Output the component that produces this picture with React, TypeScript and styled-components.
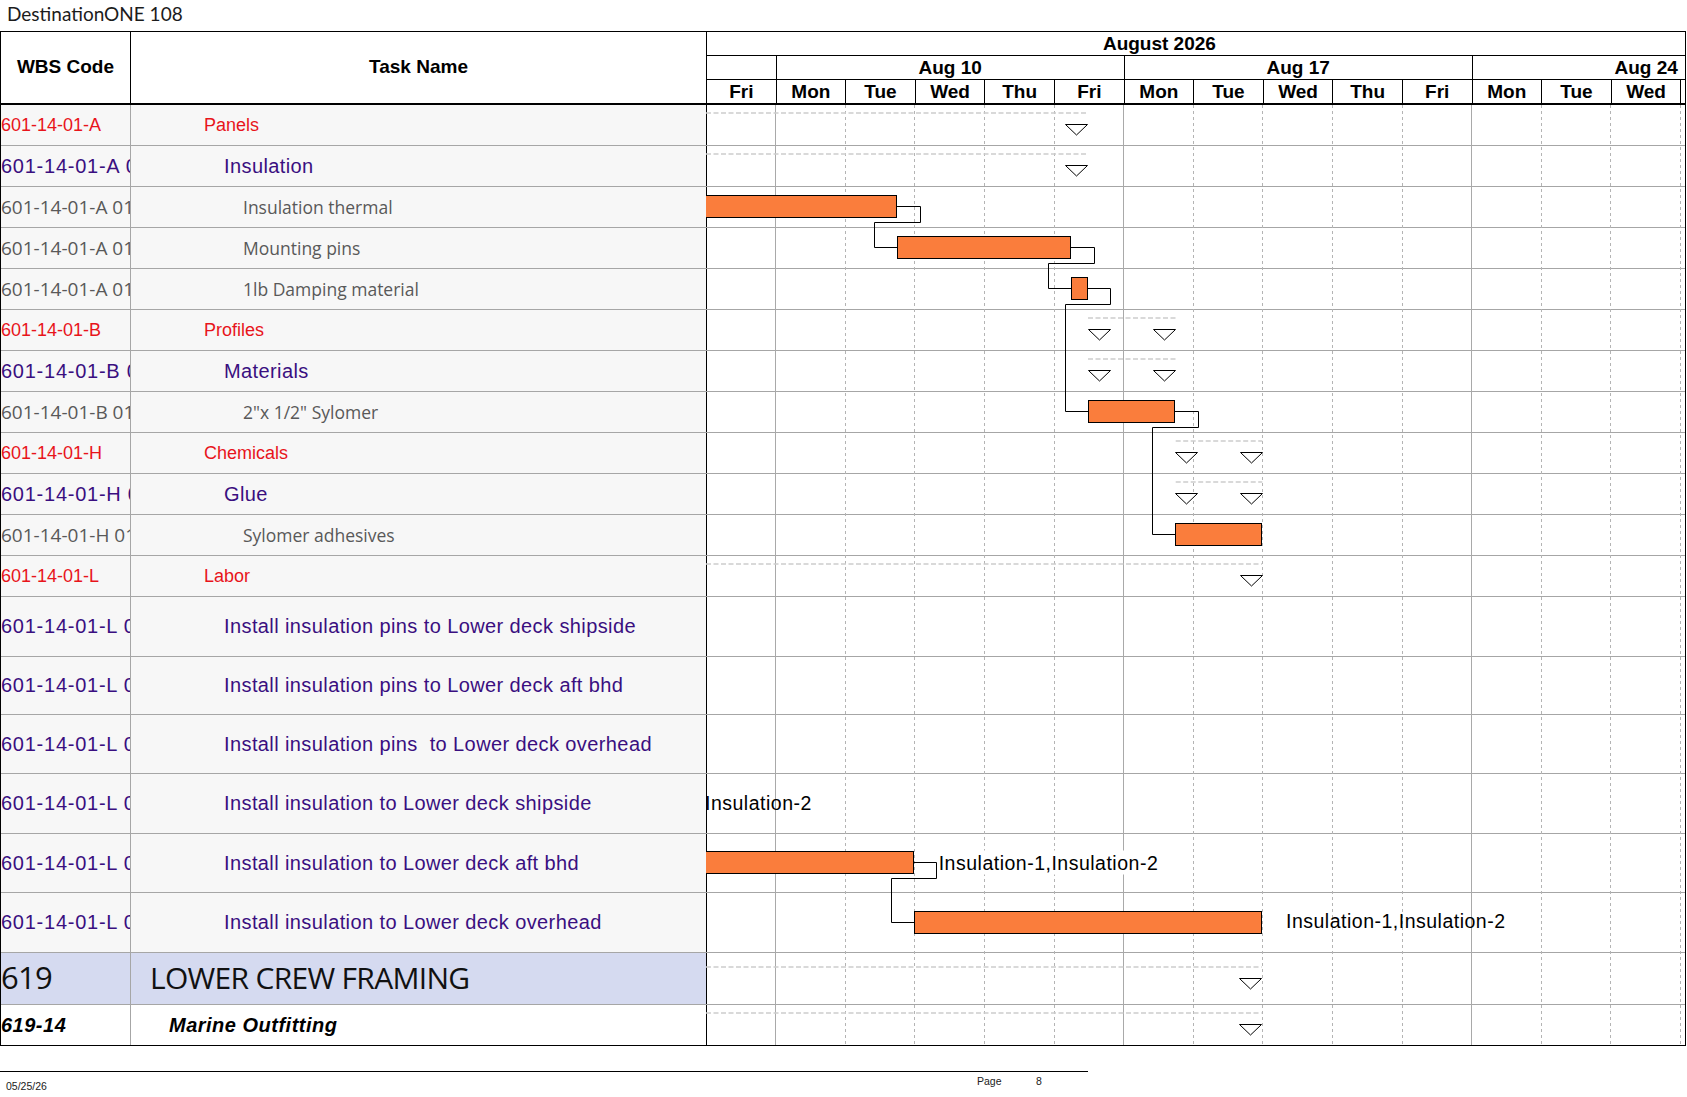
import React from 'react';
import styled, { createGlobalStyle, css } from 'styled-components';

const DAY = 69.6;
const ROW_LINE = '#a6a6a6';
const GRID_SOLID = '#a9a9a9';
const GRID_DASH = '#b4b4b4';
const BAR_FILL = '#fa7d3c';

type Kind = 'l1' | 'l2' | 'l3' | 'group' | 'sub';
interface TaskRow {
  code: string;
  name: string;
  kind: Kind;
  h: number;
}

const ROWS: TaskRow[] = [
  { code: '601-14-01-A', name: 'Panels', kind: 'l1', h: 41 },
  { code: '601-14-01-A 01', name: 'Insulation', kind: 'l2', h: 41 },
  { code: '601-14-01-A 01.01', name: 'Insulation thermal', kind: 'l3', h: 41 },
  { code: '601-14-01-A 01.02', name: 'Mounting pins', kind: 'l3', h: 41 },
  { code: '601-14-01-A 01.03', name: '1lb Damping material', kind: 'l3', h: 41 },
  { code: '601-14-01-B', name: 'Profiles', kind: 'l1', h: 41 },
  { code: '601-14-01-B 01', name: 'Materials', kind: 'l2', h: 41 },
  { code: '601-14-01-B 01.01', name: '2"x 1/2" Sylomer', kind: 'l3', h: 41 },
  { code: '601-14-01-H', name: 'Chemicals', kind: 'l1', h: 41 },
  { code: '601-14-01-H 01', name: 'Glue', kind: 'l2', h: 41 },
  { code: '601-14-01-H 01.01', name: 'Sylomer adhesives', kind: 'l3', h: 41 },
  { code: '601-14-01-L', name: 'Labor', kind: 'l1', h: 41 },
  { code: '601-14-01-L 01', name: 'Install insulation pins to Lower deck shipside', kind: 'l2', h: 60 },
  { code: '601-14-01-L 02', name: 'Install insulation pins to Lower deck aft bhd', kind: 'l2', h: 58 },
  { code: '601-14-01-L 03', name: 'Install insulation pins  to Lower deck overhead', kind: 'l2', h: 59 },
  { code: '601-14-01-L 04', name: 'Install insulation to Lower deck shipside', kind: 'l2', h: 60 },
  { code: '601-14-01-L 05', name: 'Install insulation to Lower deck aft bhd', kind: 'l2', h: 59 },
  { code: '601-14-01-L 06', name: 'Install insulation to Lower deck overhead', kind: 'l2', h: 60 },
  { code: '619', name: 'LOWER CREW FRAMING', kind: 'group', h: 52 },
  { code: '619-14', name: 'Marine Outfitting', kind: 'sub', h: 40 },
];

const DAY_NAMES = ['Fri', 'Mon', 'Tue', 'Wed', 'Thu', 'Fri', 'Mon', 'Tue', 'Wed', 'Thu', 'Fri', 'Mon', 'Tue', 'Wed', ''];
const WEEKS = ['', 'Aug 10', 'Aug 17', 'Aug 24'];

/* ---------- geometry for the chart drawing ---------- */
const TOPS: number[] = [];
let acc = 0;
ROWS.forEach((r) => {
  TOPS.push(acc);
  acc += r.h;
});
const BODY_H = acc;
const CHART_W = 979;

const snap = (v: number) => Math.floor(v) + 0.5;
const center = (i: number) => TOPS[i] + (i === ROWS.length - 1 ? 41 : ROWS[i].h) / 2 - 1;

const SUMMARIES = [
  { row: 0, s: -60, e: 381.7 },
  { row: 1, s: -60, e: 381.7 },
  { row: 5, s: 382, e: 469.7 },
  { row: 6, s: 382, e: 469.7 },
  { row: 8, s: 469.7, e: 556.3 },
  { row: 9, s: 469.7, e: 556.3 },
  { row: 11, s: -60, e: 556 },
  { row: 18, s: -60, e: 555.6 },
  { row: 19, s: -60, e: 555.6 },
];

const BARS = [
  { row: 2, s: -6, e: 190.7 },
  { row: 3, s: 191.3, e: 364.7 },
  { row: 4, s: 365.3, e: 381.3 },
  { row: 7, s: 382, e: 468.7 },
  { row: 10, s: 469.3, e: 555.7 },
  { row: 16, s: -6, e: 207.3 },
  { row: 17, s: 208.3, e: 555.6 },
];

const LINKS = [
  { from: 2, to: 3, xe: 190.7, xs: 191.3 },
  { from: 3, to: 4, xe: 364.7, xs: 365.3 },
  { from: 4, to: 7, xe: 381.3, xs: 382 },
  { from: 7, to: 10, xe: 468.7, xs: 469.3 },
  { from: 16, to: 17, xe: 207.3, xs: 208.3 },
];

const linkPath = (a: number, b: number, xe: number, xs: number) => {
  const y1 = snap(center(a));
  const y2 = snap(center(b));
  const yd = y1 + 16;
  const xr = snap(xe + 23.5);
  const xl = snap(xs - 22.5);
  return `M${snap(xe)} ${y1} H${xr} V${yd} H${xl} V${y2} H${snap(xs)}`;
};

const triangle = (x: number, t: number) => `${x},${t} ${x + 22},${t} ${x + 11},${t + 10.5}`;

/* ---------- styles ---------- */
const GlobalStyle = createGlobalStyle`
  html, body { margin: 0; padding: 0; background: #ffffff; }
  body { font-family: 'Liberation Sans', Arial, sans-serif; color: #000; }
  *, *::before, *::after { box-sizing: border-box; }
`;

const Page = styled.div`
  width: 1687px;
  height: 1097px;
  overflow: hidden;
  background: #fff;
`;

const Title = styled.div`
  height: 31px;
  padding: 3px 0 0 7px;
  font-family: Lato, 'Open Sans', sans-serif;
  font-size: 19px;
  line-height: 22px;
  color: #1c1c1c;
`;

const Table = styled.div`
  width: 1686px;
  border: 1px solid #000;
`;

const COLS = '130px 576px 978px';

const HeaderRow = styled.div`
  display: grid;
  grid-template-columns: ${COLS};
  height: 73px;
  border-bottom: 2px solid #000;
`;

const HeadCell = styled.div`
  display: flex;
  align-items: center;
  justify-content: center;
  border-right: 1px solid #000;
  font-weight: 700;
  font-size: 19px;
  padding-bottom: 2px;
`;

const ChartHead = styled.div`
  display: flex;
  flex-direction: column;
  overflow: hidden;
`;

const ScaleRow = styled.div<{ $h: number; $line?: boolean }>`
  display: flex;
  height: ${(p) => p.$h}px;
  flex: none;
  overflow: hidden;
  border-bottom: ${(p) => (p.$line ? '1px solid #000' : 'none')};
`;

const scaleText = css`
  flex: none;
  font-weight: 700;
  font-size: 19px;
  line-height: 23px;
  text-align: center;
  white-space: nowrap;
`;

const MonthCell = styled.div<{ $lead: number; $w: number }>`
  ${scaleText}
  width: ${(p) => p.$w}px;
  margin-left: ${(p) => -p.$lead}px;
`;

const WeekCell = styled.div<{ $lead: number; $w: number }>`
  ${scaleText}
  width: ${(p) => p.$w}px;
  margin-left: ${(p) => -p.$lead}px;
  border-right: 1px solid #000;
`;

const DayCell = styled.div<{ $w: number }>`
  ${scaleText}
  width: ${(p) => p.$w}px;
  border-right: 1px solid #000;
`;

const Body = styled.div`
  position: relative;
`;

const Row = styled.div<{ $h: number; $last?: boolean }>`
  display: grid;
  grid-template-columns: ${COLS};
  height: ${(p) => p.$h}px;
  border-bottom: ${(p) => (p.$last ? 'none' : `1px solid ${ROW_LINE}`)};
`;

const rowBg: Record<Kind, string> = {
  l1: '#f7f7f7',
  l2: '#f7f7f7',
  l3: '#f7f7f7',
  group: '#d5daf0',
  sub: '#ffffff',
};

const codeText: Record<Kind, ReturnType<typeof css>> = {
  l1: css`font-size: 18px; color: #e8141b;`,
  l2: css`font-size: 20px; letter-spacing: 0.75px; color: #3a0f80;`,
  l3: css`font-family: 'Open Sans', sans-serif; font-size: 19px; color: #595959;`,
  group: css`font-family: 'Open Sans', sans-serif; font-size: 31px; letter-spacing: -0.7px; color: #111; padding-bottom: 3px;`,
  sub: css`font-size: 20px; letter-spacing: 0.5px; font-weight: 700; font-style: italic; color: #000;`,
};

const nameText: Record<Kind, ReturnType<typeof css>> = {
  l1: css`font-size: 18px; color: #e8141b; padding-left: 73px;`,
  l2: css`font-size: 20px; letter-spacing: 0.4px; color: #3a0f80; padding-left: 93px;`,
  l3: css`font-family: 'Open Sans', sans-serif; font-size: 17.5px; color: #595959; padding-left: 112px;`,
  group: css`font-family: 'Open Sans', sans-serif; font-size: 30px; letter-spacing: -0.7px; color: #111; padding-left: 19px; padding-bottom: 3px;`,
  sub: css`font-size: 20px; letter-spacing: 0.5px; font-weight: 700; font-style: italic; color: #000; padding-left: 38px;`,
};

const WbsCell = styled.div<{ $kind: Kind }>`
  display: flex;
  align-items: center;
  overflow: hidden;
  white-space: nowrap;
  background: ${(p) => rowBg[p.$kind]};
  border-right: 1px solid ${ROW_LINE};
  ${(p) => codeText[p.$kind]}
`;

const TaskCell = styled.div<{ $kind: Kind }>`
  display: flex;
  align-items: center;
  overflow: hidden;
  white-space: pre;
  background: ${(p) => rowBg[p.$kind]};
  border-right: 1px solid #000;
  ${(p) => nameText[p.$kind]}
`;

const ChartCell = styled.div`
  background: #fff;
`;

const ChartDrawing = styled.svg`
  position: absolute;
  left: 705px;
  top: 0;
  overflow: hidden;
  pointer-events: none;
`;

const BarLabel = styled.text`
  font-family: 'Liberation Sans', Arial, sans-serif;
  font-size: 19.5px;
  letter-spacing: 0.5px;
  fill: #000;
`;

const FooterRule = styled.div`
  width: 1088px;
  margin-top: 25px;
  border-top: 1px solid #000;
`;

const FooterRow = styled.div`
  display: grid;
  grid-template-columns: 977px 59px auto;
  font-size: 10.5px;
  line-height: 12px;
  color: #222;
`;

const FooterText = styled.span<{ $top: number; $left?: number }>`
  padding-top: ${(p) => p.$top}px;
  padding-left: ${(p) => p.$left ?? 0}px;
`;

/* ---------- components ---------- */
const GanttDrawing: React.FC = () => {
  const dayLines = Array.from({ length: 14 }, (_, i) => i + 1).map((j) => ({
    x: Math.round(0.6 + DAY * j) - 1 + 0.5,
    solid: j === 1 || j === 6 || j === 11,
  }));

  return (
    <ChartDrawing width={CHART_W} height={BODY_H} viewBox={`0 0 ${CHART_W} ${BODY_H}`}>
      {dayLines.map((l) => (
        <line
          key={l.x}
          x1={l.x}
          x2={l.x}
          y1={0}
          y2={BODY_H}
          stroke={l.solid ? GRID_SOLID : GRID_DASH}
          strokeWidth={1}
          strokeDasharray={l.solid ? undefined : '3 3'}
        />
      ))}

      {SUMMARIES.map((s) => {
        const y = Math.round(center(s.row) - 11.5);
        return (
          <line
            key={`d${s.row}`}
            x1={Math.max(s.s, 0)}
            x2={s.e}
            y1={y}
            y2={y}
            stroke="#cdcdcd"
            strokeWidth={1.6}
            strokeDasharray="5 2.5"
          />
        );
      })}

      {LINKS.map((l) => (
        <path key={`l${l.from}`} d={linkPath(l.from, l.to, l.xe, l.xs)} fill="none" stroke="#000" strokeWidth={1} />
      ))}

      {BARS.map((b) => {
        const x = snap(b.s);
        const w = snap(b.e) - x;
        return (
          <rect
            key={`b${b.row}`}
            x={x}
            y={snap(center(b.row)) - 11}
            width={w}
            height={22}
            fill={BAR_FILL}
            stroke="#000"
            strokeWidth={1}
          />
        );
      })}

      {SUMMARIES.map((s) => {
        const t = snap(center(s.row));
        return (
          <g key={`t${s.row}`} fill="#fff" stroke="#000" strokeWidth={1}>
            <polygon points={triangle(snap(s.s), t)} />
            <polygon points={triangle(snap(s.e - 22), t)} />
          </g>
        );
      })}

      <BarLabel x={-1} y={center(15) + 7}>
        Insulation-2
      </BarLabel>
      <rect x={231} y={center(16) - 12} width={226} height={24} fill="#fff" />
      <BarLabel x={232.7} y={center(16) + 7}>
        Insulation-1,Insulation-2
      </BarLabel>
      <BarLabel x={580} y={center(17) + 6}>
        Insulation-1,Insulation-2
      </BarLabel>
    </ChartDrawing>
  );
};

const App: React.FC = () => (
  <Page>
    <GlobalStyle />
    <Title>DestinationONE 108</Title>
    <Table>
      <HeaderRow>
        <HeadCell>WBS Code</HeadCell>
        <HeadCell>Task Name</HeadCell>
        <ChartHead>
          <ScaleRow $h={24} $line>
            <MonthCell $lead={4 * DAY} $w={21 * DAY}>
              August 2026
            </MonthCell>
          </ScaleRow>
          <ScaleRow $h={24} $line>
            {WEEKS.map((w, i) => (
              <WeekCell key={`w${i}`} $lead={i === 0 ? 4 * DAY : 0} $w={5 * DAY}>
                {w}
              </WeekCell>
            ))}
          </ScaleRow>
          <ScaleRow $h={23}>
            {DAY_NAMES.map((d, i) => (
              <DayCell key={`d${i}`} $w={DAY}>
                {d}
              </DayCell>
            ))}
          </ScaleRow>
        </ChartHead>
      </HeaderRow>
      <Body>
        {ROWS.map((r, i) => (
          <Row key={`${r.code}-${i}`} $h={r.h} $last={i === ROWS.length - 1}>
            <WbsCell $kind={r.kind}>{r.code}</WbsCell>
            <TaskCell $kind={r.kind}>{r.name}</TaskCell>
            <ChartCell />
          </Row>
        ))}
        <GanttDrawing />
      </Body>
    </Table>
    <FooterRule />
    <FooterRow>
      <FooterText $top={8} $left={6}>
        05/25/26
      </FooterText>
      <FooterText $top={3}>Page</FooterText>
      <FooterText $top={3}>8</FooterText>
    </FooterRow>
  </Page>
);

export default App;
